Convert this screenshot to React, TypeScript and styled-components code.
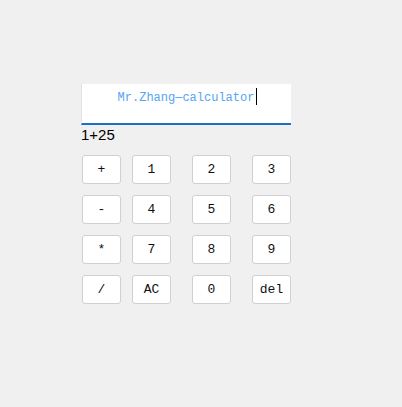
import React, { useState } from 'react';
import styled, { createGlobalStyle } from 'styled-components';

const GlobalStyle = createGlobalStyle`
  html, body {
    margin: 0;
    padding: 0;
    background: #f0f0f0;
  }
`;

const keys = ['+', '1', '2', '3', '-', '4', '5', '6', '*', '7', '8', '9', '/', 'AC', '0', 'del'];

const App: React.FC = () => {
  const [expr, setExpr] = useState('1+25');

  const press = (k: string) => {
    if (k === 'AC') setExpr('');
    else if (k === 'del') setExpr(expr.slice(0, -1));
    else setExpr(expr + k);
  };

  return (
    <Page>
      <GlobalStyle />
      <Display>
        <Title>
          Mr.Zhang—calculator
          <Caret />
        </Title>
      </Display>
      <Expr>{expr}</Expr>
      <Keypad>
        {keys.map(k => (
          <Key key={k} onClick={() => press(k)}>
            {k}
          </Key>
        ))}
      </Keypad>
    </Page>
  );
};

export default App;

const Page = styled.div`
  width: 402px;
  height: 407px;
  box-sizing: border-box;
  padding: 84px 0 0 81px;
  display: flex;
  flex-direction: column;
`;

const Display = styled.div`
  width: 210px;
  height: 41px;
  box-sizing: border-box;
  background: #ffffff;
  border-left: 1px solid #e2e2e2;
  border-bottom: 2px solid #1a6fc9;
  padding-top: 3px;
  text-align: center;
`;

const Title = styled.span`
  font-family: 'Liberation Mono', monospace;
  font-size: 12px;
  line-height: 18px;
  color: #55a5f2;
  padding-left: 2px;
`;

const Caret = styled.span`
  display: inline-block;
  width: 1px;
  height: 17px;
  background: #000;
  vertical-align: -4px;
  margin-left: 2px;
`;

const Expr = styled.div`
  font-family: 'Liberation Sans', Arial, sans-serif;
  font-size: 15px;
  line-height: 20px;
  height: 20px;
  color: #000;
`;

const Keypad = styled.div`
  margin-top: 10px;
  margin-left: 1px;
  display: grid;
  grid-template-columns: 50px 60px 60px 39px;
  grid-auto-rows: 29px;
  row-gap: 11px;
`;

const Key = styled.button`
  width: 39px;
  height: 29px;
  box-sizing: border-box;
  padding: 0;
  background: #ffffff;
  border: 1px solid #d0d0d0;
  border-radius: 3px;
  font-family: 'Liberation Mono', monospace;
  font-size: 13px;
  font-weight: 400;
  color: #111;
  cursor: pointer;
  &:hover {
    background: #f7f7f7;
  }
`;
